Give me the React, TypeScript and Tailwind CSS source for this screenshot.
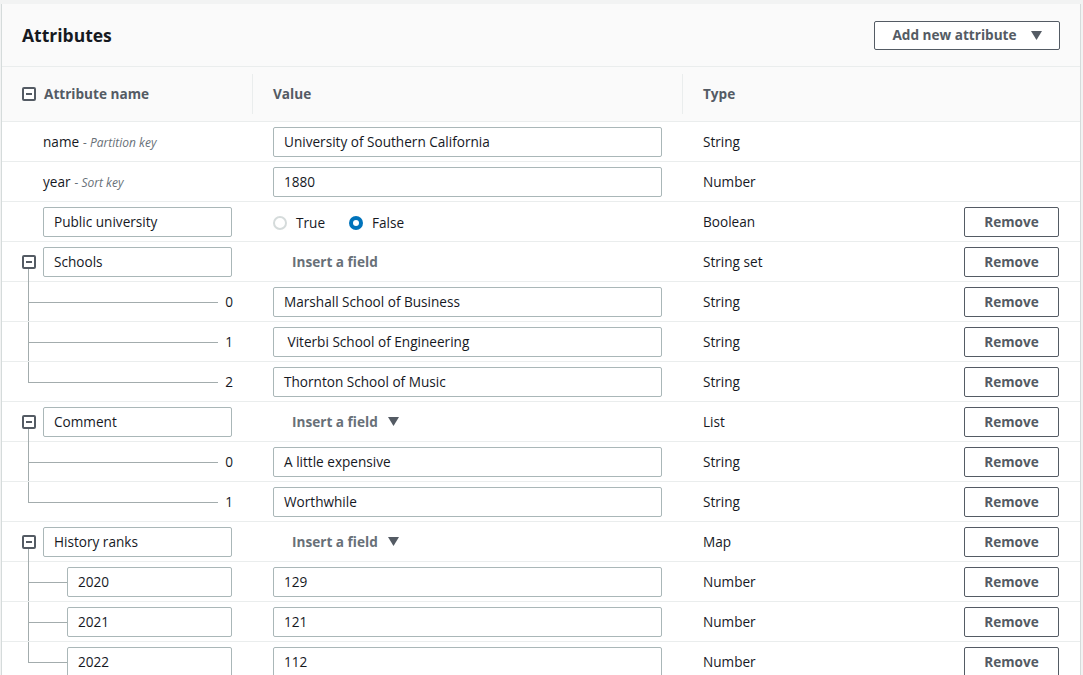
import { ReactNode } from "react"

type Row = {
  kind: "key" | "plain" | "parent" | "child" | "mapchild"
  name: string
  keyLabel?: string
  value?: string
  radio?: boolean
  insert?: "plain" | "arrow"
  type: string
  index?: string
  last?: boolean
  remove?: boolean
}

const rows: Row[] = [
  { kind: "key", name: "name", keyLabel: "Partition key", value: "University of Southern California", type: "String" },
  { kind: "key", name: "year", keyLabel: "Sort key", value: "1880", type: "Number" },
  { kind: "plain", name: "Public university", radio: true, type: "Boolean", remove: true },
  { kind: "parent", name: "Schools", insert: "plain", type: "String set", remove: true },
  { kind: "child", name: "", index: "0", value: "Marshall School of Business", type: "String", remove: true },
  { kind: "child", name: "", index: "1", value: " Viterbi School of Engineering", type: "String", remove: true },
  { kind: "child", name: "", index: "2", value: "Thornton School of Music", type: "String", remove: true, last: true },
  { kind: "parent", name: "Comment", insert: "arrow", type: "List", remove: true },
  { kind: "child", name: "", index: "0", value: "A little expensive", type: "String", remove: true },
  { kind: "child", name: "", index: "1", value: "Worthwhile", type: "String", remove: true, last: true },
  { kind: "parent", name: "History ranks", insert: "arrow", type: "Map", remove: true },
  { kind: "mapchild", name: "2020", value: "129", type: "Number", remove: true },
  { kind: "mapchild", name: "2021", value: "121", type: "Number", remove: true },
  { kind: "mapchild", name: "2022", value: "112", type: "Number", remove: true, last: true },
]

function Caret() {
  return (
    <svg width="11" height="9" viewBox="0 0 11 9" className="fill-[#545b64]">
      <path d="M0 0h11L5.5 9z" />
    </svg>
  )
}

function MinusBox() {
  return (
    <span className="w-[14px] h-[14px] border-2 border-[#545b64] rounded-[2px] flex items-center justify-center bg-white">
      <span className="w-[6px] h-[2px] bg-[#545b64]" />
    </span>
  )
}

function TextBox({ value, className }: { value: string; className: string }) {
  return (
    <div className={`h-[30px] border border-[#aab7b8] rounded-[2px] bg-white flex items-center px-[10px] pt-[1px] text-[13.6px] text-[#16191f] whitespace-pre ${className}`}>
      {value}
    </div>
  )
}

function Radio({ checked, label }: { checked?: boolean; label: string }) {
  return (
    <label className="flex items-center gap-[9px]">
      {checked ? (
        <span className="w-[14px] h-[14px] rounded-full bg-[#0073bb] flex items-center justify-center">
          <span className="w-[6px] h-[6px] rounded-full bg-white" />
        </span>
      ) : (
        <span className="w-[14px] h-[14px] rounded-full border-2 border-[#d5dbdb] bg-white" />
      )}
      <span className="text-[13.6px] text-[#16191f]">{label}</span>
    </label>
  )
}

function NameCell({ row }: { row: Row }) {
  let content: ReactNode = null
  if (row.kind === "key") {
    content = (
      <div className="pl-[41px] pt-[1px] flex items-baseline gap-[4px]">
        <span className="text-[13.6px] text-[#16191f]">{row.name}</span>
        <span className="text-[12px] italic text-[#687078]">- {row.keyLabel}</span>
      </div>
    )
  } else if (row.kind === "plain") {
    content = <TextBox value={row.name} className="ml-[41px] w-[189px]" />
  } else if (row.kind === "parent") {
    content = (
      <div className="flex items-center">
        <div className="relative pl-[20px] pr-[7px]">
          <MinusBox />
          {/* line down to the children */}
          <span className="absolute left-[26px] top-[14px] h-[20px] w-px bg-[#a3acad]" />
        </div>
        <TextBox value={row.name} className="w-[189px]" />
      </div>
    )
  } else if (row.kind === "child") {
    content = (
      <div className="flex items-center justify-end pr-[20px] pt-[1px] text-[13.6px] text-[#16191f]">{row.index}</div>
    )
  } else {
    content = <TextBox value={row.name} className="ml-[65px] w-[165px]" />
  }

  const isChild = row.kind === "child" || row.kind === "mapchild"
  return (
    <div className="relative w-[251px] h-full flex items-center">
      {isChild && (
        <>
          <span className={`absolute left-[26px] top-0 w-px bg-[#a3acad] ${row.last ? "h-[20px]" : "h-full"}`} />
          <span
            className={`absolute left-[26px] top-[20px] h-px bg-[#a3acad] ${row.kind === "child" ? "w-[190px]" : "w-[39px]"}`}
          />
        </>
      )}
      <div className="relative w-full">{content}</div>
    </div>
  )
}

function ValueCell({ row }: { row: Row }) {
  return (
    <div className="w-[430px] pl-[20px] flex items-center">
      {row.value !== undefined && <TextBox value={row.value} className="w-[389px]" />}
      {row.radio && (
        <div className="flex items-center gap-[24px] pt-[4px]">
          <Radio label="True" />
          <Radio label="False" checked />
        </div>
      )}
      {row.insert && (
        <div className="pl-[19px] pt-[1px] flex items-center gap-[10px] text-[13.6px] font-bold text-[#687078]">
          <span>Insert a field</span>
          {row.insert === "arrow" && <Caret />}
        </div>
      )}
    </div>
  )
}

export default function App() {
  return (
    <div
      className="min-h-screen bg-[#f2f3f3] pt-[4px] pl-[1px] text-[#16191f]"
      style={{ fontFamily: "'Open Sans', 'Liberation Sans', sans-serif" }}
    >
      <div className="w-[1080px] bg-white border-x border-[#d5dbdb]">
        <div className="h-[63px] bg-[#fafafa] border-b border-[#eaeded] flex items-center justify-between pl-[20px] pr-[20px]">
          <h2 className="text-[17.5px] font-bold text-[#16191f]">Attributes</h2>
          <button className="h-[29px] w-[186px] border border-[#545b64] rounded-[2px] bg-white flex items-center justify-center gap-[14px] pt-[1px] text-[13.6px] font-bold text-[#545b64]">
            <span>Add new attribute</span>
            <Caret />
          </button>
        </div>

        <div className="h-[55px] bg-[#fafafa] border-b border-[#eaeded] flex items-center text-[13.6px] font-bold text-[#545b64]">
          <div className="w-[251px] flex items-center gap-[8px] pl-[20px] h-[40px] border-r border-[#eaeded]">
            <MinusBox />
            <span>Attribute name</span>
          </div>
          <div className="w-[430px] pl-[20px] h-[40px] flex items-center border-r border-[#eaeded]">Value</div>
          <div className="pl-[20px]">Type</div>
        </div>

        {rows.map((row, i) => (
          <div key={i} className="h-[40px] border-b border-[#eaeded] flex items-center">
            <NameCell row={row} />
            <ValueCell row={row} />
            <div className="w-[281px] pl-[20px] pt-[1px] text-[13.6px] text-[#16191f]">{row.type}</div>
            {row.remove && (
              <button className="h-[30px] w-[95px] border border-[#545b64] rounded-[2px] bg-white pt-[1px] text-[13.6px] font-bold text-[#545b64]">
                Remove
              </button>
            )}
          </div>
        ))}
      </div>
    </div>
  )
}
